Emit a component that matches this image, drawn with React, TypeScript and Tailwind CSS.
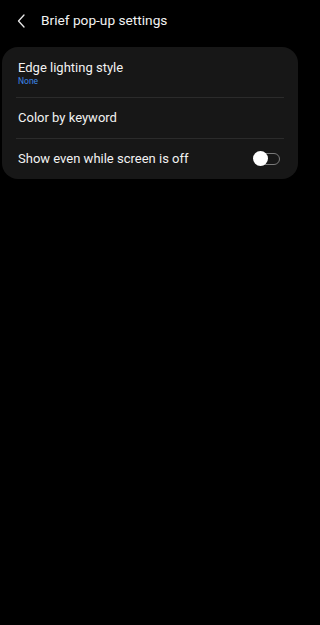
export default function App() {
  return (
    <div
      className="min-h-screen w-full bg-black text-[#f2f2f2]"
      style={{ fontFamily: "Roboto, 'Noto Sans', sans-serif" }}
    >
      <div className="w-[300px]">
        <header className="flex h-[42px] items-center pl-[16px]">
          <svg className="h-[14px] w-[10px]" viewBox="0 0 10 14" fill="none" stroke="#e8e8e8" strokeWidth={1.3}>
            <path d="M8 1 L2.5 7 L8 13" strokeLinecap="round" strokeLinejoin="round" />
          </svg>
          <h1 className="ml-[15px] text-[13.7px] leading-none text-[#f2f2f2]">Brief pop-up settings</h1>
        </header>

        <div className="mx-[2px] mt-[5px] rounded-[16px] bg-[#171717] px-[14px]">
          <div className="flex h-[50px] flex-col justify-center pl-[2px] pt-[2px]">
            <p className="text-[13px] leading-[16px]">Edge lighting style</p>
            <p className="text-[8.5px] leading-[11px] text-[#3d86e6]">None</p>
          </div>
          <div className="h-px bg-[#2b2b2b]" />
          <div className="flex h-[40px] items-center pl-[2px]">
            <p className="text-[13px]">Color by keyword</p>
          </div>
          <div className="h-px bg-[#2b2b2b]" />
          <div className="flex h-[40px] items-center justify-between pl-[2px] pr-[4px]">
            <p className="text-[13px]">Show even while screen is off</p>
            <div className="relative h-[12px] w-[26px] rounded-full border border-[#7a7a7a]">
              <div className="absolute left-[-2px] top-[-3.5px] h-[15px] w-[15px] rounded-full bg-white" />
            </div>
          </div>
        </div>
      </div>
    </div>
  )
}
